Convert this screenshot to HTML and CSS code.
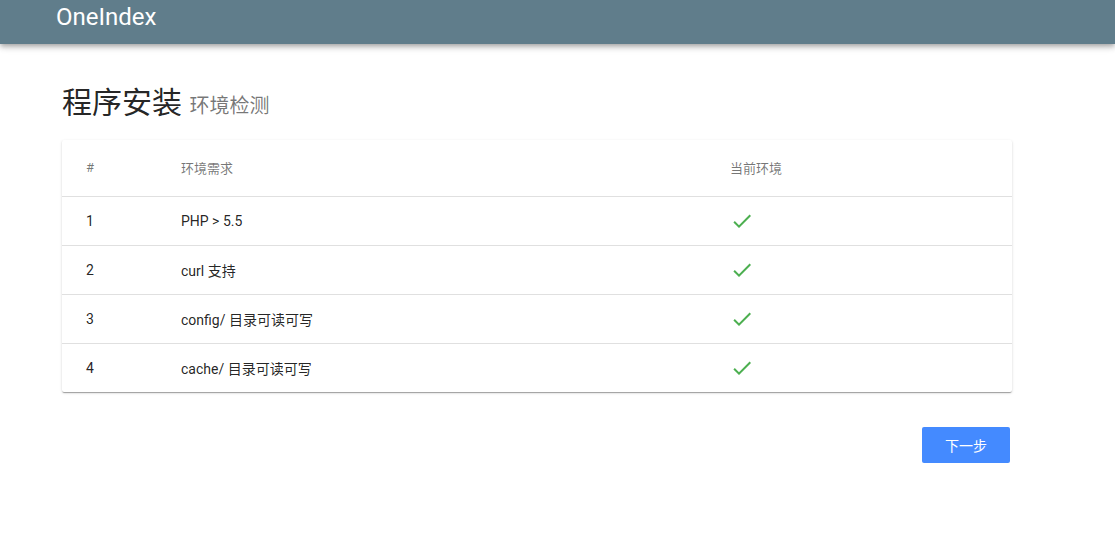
FILE: index.html
```html
<!DOCTYPE html>
<html lang="zh-CN">
<head>
<meta charset="utf-8">
<title>OneIndex</title>
<link rel="stylesheet" href="styles.css">
</head>
<body>
<header class="appbar">
  <div class="appbar-title">OneIndex</div>
</header>
<main class="container">
  <h1 class="page-title">程序安装 <small class="page-sub">环境检测</small></h1>
  <div class="card">
    <table class="env-table">
      <thead>
        <tr>
          <th class="col-num">#</th>
          <th class="col-req">环境需求</th>
          <th class="col-cur">当前环境</th>
        </tr>
      </thead>
      <tbody>
        <tr>
          <td class="col-num">1</td>
          <td class="col-req">PHP &gt; 5.5</td>
          <td class="col-cur"><svg class="check" viewBox="0 0 24 24"><path d="M9 16.17L4.83 12l-1.42 1.41L9 19 21 7l-1.41-1.41z"/></svg></td>
        </tr>
        <tr>
          <td class="col-num">2</td>
          <td class="col-req">curl 支持</td>
          <td class="col-cur"><svg class="check" viewBox="0 0 24 24"><path d="M9 16.17L4.83 12l-1.42 1.41L9 19 21 7l-1.41-1.41z"/></svg></td>
        </tr>
        <tr>
          <td class="col-num">3</td>
          <td class="col-req">config/ 目录可读可写</td>
          <td class="col-cur"><svg class="check" viewBox="0 0 24 24"><path d="M9 16.17L4.83 12l-1.42 1.41L9 19 21 7l-1.41-1.41z"/></svg></td>
        </tr>
        <tr>
          <td class="col-num">4</td>
          <td class="col-req">cache/ 目录可读可写</td>
          <td class="col-cur"><svg class="check" viewBox="0 0 24 24"><path d="M9 16.17L4.83 12l-1.42 1.41L9 19 21 7l-1.41-1.41z"/></svg></td>
        </tr>
      </tbody>
    </table>
  </div>
  <div class="actions">
    <a class="btn" href="#">下一步</a>
  </div>
</main>
</body>
</html>
```
FILE: styles.css
```css
* { box-sizing: border-box; }
html, body {
  margin: 0;
  padding: 0;
  background: #fff;
  font-family: Roboto, "Noto Sans CJK SC", "Noto Sans", sans-serif;
  color: rgba(0,0,0,.87);
}
.appbar {
  height: 44px;
  background: #607d8b;
  box-shadow: 0 2px 4px -1px rgba(0,0,0,.2), 0 4px 5px 0 rgba(0,0,0,.14), 0 1px 10px 0 rgba(0,0,0,.12);
  padding-left: 56px;
}
.appbar-title {
  color: #fff;
  font-size: 24px;
  line-height: 34px;
}
.container {
  padding-left: 62px;
  width: 1012px;
}
.page-title {
  margin: 36px 0 0;
  height: 60px;
  font-size: 30px;
  font-weight: 400;
  line-height: 46px;
  color: rgba(0,0,0,.87);
}
.page-sub {
  font-size: 20px;
  color: rgba(0,0,0,.54);
}
.card {
  background: #fff;
  border-radius: 2px;
  box-shadow: 0 2px 1px -1px rgba(0,0,0,.2), 0 1px 1px 0 rgba(0,0,0,.14), 0 1px 3px 0 rgba(0,0,0,.14);
}
.env-table {
  width: 100%;
  border-collapse: collapse;
  table-layout: fixed;
}
.env-table th {
  height: 56px;
  font-size: 13px;
  font-weight: 400;
  color: rgba(0,0,0,.54);
  text-align: left;
  padding: 0 28px;
}
.env-table td {
  height: 49px;
  font-size: 14px;
  padding: 0 28px;
  border-top: 1px solid rgba(0,0,0,.12);
  vertical-align: middle;
}
.env-table .col-num { width: 91px; padding-left: 24px; }
.env-table .col-req { width: 549px; }
.env-table .col-cur { width: 310px; }
.check {
  display: block;
  width: 24px;
  height: 24px;
  fill: #4caf50;
  margin-top: 1px;
}
.actions {
  display: flex;
  justify-content: flex-end;
  padding: 35px 2px 0 0;
}
.btn {
  display: flex;
  align-items: center;
  justify-content: center;
  width: 88px;
  height: 36px;
  background: #448aff;
  color: #fff;
  font-size: 14px;
  text-decoration: none;
  border-radius: 2px;
}
```
